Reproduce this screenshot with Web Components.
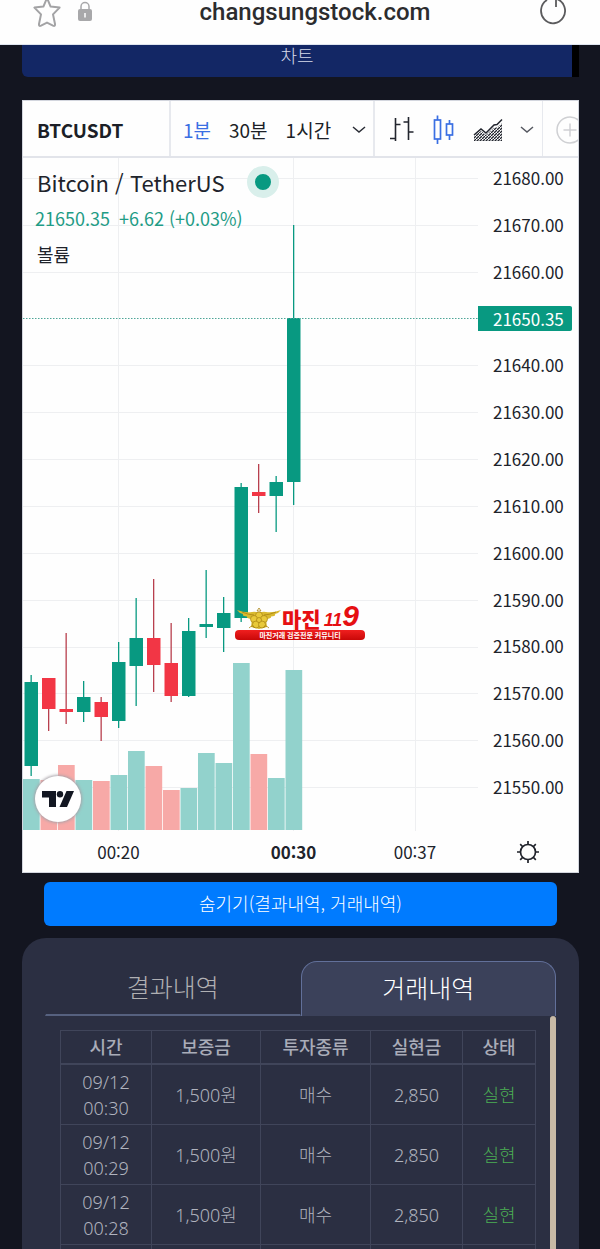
<!DOCTYPE html>
<html lang="ko">
<head>
<meta charset="utf-8">
<meta name="viewport" content="width=device-width, initial-scale=1">
<title>changsungstock.com</title>
<style>
  body {
    margin: 0;
    background: #131520;
    font-family: "Noto Sans CJK KR", sans-serif;
  }
</style>
</head>
<body>
<trade-app></trade-app>

<script>
class BrowserBar extends HTMLElement {
  constructor() {
    super();
    this.attachShadow({ mode: 'open' });
    this.shadowRoot.innerHTML = `
    <style>
    :host {
      display: flex;
      justify-content: space-between;
      align-items: flex-start;
      height: 44px;
      flex: none;
      padding: 0 34px 0 32px;
      background: #fefefe;
      border-bottom: 1px solid #dfe5ef;
    }
    button {
      display: block;
      border: 0;
      padding: 0;
      background: none;
      cursor: pointer;
    }
    .left {
      display: flex;
      gap: 16px;
    }
    .url {
      font: 500 24px/24px Roboto, sans-serif;
      color: #2c2c2e;
    }
    svg { display: block; }
    </style>
    <div class="left">
      <button aria-label="Bookmark">
        <svg width="30" height="30" viewBox="0 0 30 30" fill="none" stroke="#a3a3a5" stroke-width="2" stroke-linejoin="round">
          <path d="M15 -2 L18.6 6.6 L27.6 7.6 L21 14.4 L23 24 Q23.2 26.6 21 25.6 L15 22.6 L9 25.6 Q6.8 26.6 7 24 L9 14.4 L2.4 7.6 L11.4 6.6 Z"/>
        </svg>
      </button>
      <svg width="14" height="24" viewBox="0 0 14 24">
        <path d="M3 11 V6.5 a4 4 0 0 1 8 0 V11" fill="none" stroke="#a8a8aa" stroke-width="1.5"/>
        <rect x="0" y="9" width="14" height="12" rx="2" fill="#a8a8aa"/>
        <path d="M7 13 V17.500" stroke="#fff" stroke-width="1.5"/>
      </svg>
    </div>
    <button class="url">changsungstock.com</button>
    <button aria-label="Reload">
      <svg width="28" height="26" viewBox="0 0 28 26" fill="none" stroke="#5b5b5d" stroke-width="1.8">
        <path d="M19 -1 A12 12.5 0 1 1 9 0 M18 7 V-2"/>
      </svg>
    </button>
    `;
  }
}

class ChartToolbar extends HTMLElement {
  constructor() {
    super();
    this.attachShadow({ mode: 'open' });
    this.shadowRoot.innerHTML = `
    <style>
    :host {
      display: flex;
      height: 55px;
      border-bottom: 2px solid #e2e4ea;
      color: #1c1f27;
      overflow: hidden;
    }
    .group {
      display: flex;
      align-items: center;
      flex: none;
      box-sizing: border-box;
      padding-top: 2px;
      border-right: 2px solid #e7e9ee;
    }
    button {
      border: 0;
      padding: 0;
      background: none;
      font: inherit;
      font-size: 19px;
      line-height: 28px;
      color: inherit;
      cursor: pointer;
    }
    .symbol { width: 148px; padding-left: 14px; }
    .symbol button { font-weight: 700; }
    .times { width: 204px; padding-left: 12px; gap: 18px; }
    .styles { width: 168px; padding-left: 14px; gap: 17px; border-right-width: 1px; }
    .more { padding-left: 12px; flex: 1; min-width: 0; border: 0; overflow: hidden; }
    .active { color: #3a6fe3; }
    svg { display: block; flex: none; }
    </style>
    <div class="group symbol"><button>BTCUSDT</button></div>
    <div class="group times">
      <button class="active">1분</button>
      <button>30분</button>
      <button>1시간</button>
      <button aria-label="More intervals">
        <svg width="18" height="8" viewBox="0 0 18 8" fill="none" stroke="#2a2d36" stroke-width="1.5"><path d="M4 1 L10 6 L16 1"/></svg>
      </button>
    </div>
    <div class="group styles">
      <button aria-label="Bars">
        <svg width="26" height="30" viewBox="0 0 26 30" fill="none" stroke="#22252e" stroke-width="1.6">
          <path d="M6.5 3 V26 M1 23.5 H6.5 M6.5 9.5 H11.5 M19.5 2 V25 M14.5 7 H19.5 M19.5 17 H24.5"/>
        </svg>
      </button>
      <button aria-label="Candles">
        <svg width="24" height="30" viewBox="0 0 24 30" fill="none" stroke="#3a6fe3" stroke-width="1.7">
          <path d="M5.500 .5 V5 M5.500 24 V29 M17.500 5 V9 M17.500 20 V25"/>
          <rect x="2.500" y="5" width="6" height="19"/>
          <rect x="14.500" y="9" width="6" height="11"/>
        </svg>
      </button>
      <button aria-label="Area">
        <svg width="30" height="24" viewBox="0 0 30 24" fill="none">
          <defs>
            <pattern id="dots" width="3" height="3" patternUnits="userSpaceOnUse">
              <path d="M0 3 L3 0" stroke="#22252e" stroke-width="1.3"/>
            </pattern>
          </defs>
          <path d="M1 18 L8 13 L13 17 L21 9.5 L24 9.5 L29 5 V23 H1 Z" fill="url(#dots)"/>
          <path d="M1 17 L8 11 L13 15 L21 7 L24 6.5 L29 1.5" stroke="#22252e" stroke-width="1.5"/>
        </svg>
      </button>
      <button aria-label="More styles">
        <svg width="16" height="8" viewBox="0 0 16 8" fill="none" stroke="#555860" stroke-width="1.5"><path d="M1 1 L7 6 L13 1"/></svg>
      </button>
    </div>
    <div class="group more">
      <button aria-label="Compare">
        <svg width="30" height="30" viewBox="0 0 30 30" fill="none" stroke="#cfd0d3" stroke-width="1.5">
          <circle cx="15" cy="15" r="13"/><path d="M8.5 15 H21.5 M15 8.5 V21.5"/>
        </svg>
      </button>
    </div>
    `;
  }
}

class SiteMark extends HTMLElement {
  constructor() {
    super();
    this.attachShadow({ mode: 'open' });
    this.shadowRoot.innerHTML = `
    <style>
    :host {
      display: block;
      width: 130px;
      color: #e60f12;
      white-space: nowrap;
    }
    .top {
      display: flex;
      align-items: flex-end;
      height: 21px;
      padding-left: 2px;
    }
    .name {
      font-weight: 900;
      font-size: 21px;
      line-height: 24px;
      margin-left: 1px;
    }
    .num {
      font: italic 900 18px/20px "Liberation Sans", sans-serif;
      margin-left: 3px;
    }
    .num b { font-size: 30px; line-height: 20px; }
    .bar {
      height: 10px;
      border-radius: 4px;
      background: linear-gradient(#f01f1f, #c90808);
      color: #fff;
      font-weight: 700;
      font-size: 7px;
      line-height: 10px;
      text-align: center;
    }
    </style>
    <div class="top">
      <svg width="44" height="22" viewBox="0 0 44 22">
        <path d="M0 2 Q8 5 15 4 Q18 3 22 5 Q26 3 29 4 Q36 5 44 2 Q42 5 38 6 Q39 8 34 8.5 Q35 10.5 29 11 L30 19 L22 21 L14 19 L15 11 Q9 10.5 10 8.5 Q5 8 6 6 Q2 5 0 2Z" fill="#d9b92f"/>
        <g fill="#e8c93a" stroke="#a98412" stroke-width=".7">
          <circle cx="22" cy="7.5" r="3.5"/><circle cx="17" cy="11" r="3.5"/><circle cx="27" cy="11" r="3.5"/>
          <circle cx="19" cy="16.5" r="3.5"/><circle cx="25" cy="16.5" r="3.5"/><circle cx="22" cy="12" r="2.5"/>
        </g>
        <path d="M22 0 L24 3 H20Z M5 4 Q12 7 17 7 M39 4 Q32 7 27 7 M12 20 Q16 16 18 20 M32 20 Q28 16 26 20" fill="none" stroke="#a98412" stroke-width=".8"/>
      </svg>
      <span class="name">마진</span><span class="num">11<b>9</b></span>
    </div>
    <div class="bar">마진거래 검증전문 커뮤니티</div>
    `;
  }
}

// high, body top, body bottom, low, volume top
const CANDLES = [
  ['up', 517, 524, 608, 618, 621],
  ['down', 520, 520, 551, 573, 622],
  ['down', 475, 551, 554, 566, 607],
  ['up', 523, 539, 554, 564, 622],
  ['down', 539, 544, 559, 583, 623],
  ['up', 484, 504, 563, 570, 617],
  ['up', 440, 480, 508, 548, 593],
  ['down', 421, 480, 507, 534, 608],
  ['down', 465, 505, 538, 544, 632],
  ['up', 460, 473, 538, 539, 630],
  ['up', 412, 466, 469, 480, 595],
  ['up', 439, 455, 470, 494, 605],
  ['up', 325, 329, 460, 464, 505],
  ['down', 306, 334, 338, 355, 596],
  ['up', 318, 324, 338, 374, 620],
  ['up', 67, 160, 324, 347, 512],
];
const BASE = 672;
const STEP = 17.5;
const PRICES = ['21680.00', '21670.00', '21660.00', '21650.35', '21640.00', '21630.00', '21620.00',
  '21610.00', '21600.00', '21590.00', '21580.00', '21570.00', '21560.00', '21550.00'];

class PriceChart extends HTMLElement {
  constructor() {
    super();
    this.attachShadow({ mode: 'open' });

    const grid = PRICES.map((p, i) => p === '21650.35' ? '' :
      `<path class="grid" d="M0 ${Math.round(20 + i * 46.85)}.5 H455"/>`).join('');
    const bars = CANDLES.map(([dir, high, top, bottom, low, vol], i) => {
      const x = 8 + i * STEP;
      return `<g class="${dir}">
        <rect class="vol" x="${x - 8}" y="${vol}" width="16.7" height="${BASE - vol}"/>
        <rect class="wick" x="${x - 0.5}" y="${high}" width="1.3" height="${low - high}"/>
        <rect x="${x - 6.5}" y="${top}" width="13.5" height="${bottom - top}"/>
      </g>`;
    }).join('');
    const labels = PRICES.map(p => `<span${p === '21650.35' ? ' class="last"' : ''}>${p}</span>`).join('');

    this.shadowRoot.innerHTML = `
    <style>
    :host {
      display: grid;
      grid-template-columns: 1fr 100px;
      grid-template-rows: 673px 41px;
      color: #20232b;
      font-size: 17px;
    }
    .plot {
      display: grid;
      min-width: 0;
    }
    .plot > * { grid-area: 1 / 1; }
    .canvas { display: block; width: 100%; height: 673px; }
    .grid { stroke: #eeeff1; }
    .up { fill: #089981; }
    .down { fill: #f23645; }
    .down .wick { fill: #b8404e; }
    .up .vol { fill: #92d2cc; }
    .down .vol { fill: #f7a9a7; }
    .legend { padding: 8px 12px; z-index: 1; }
    .title {
      display: flex;
      align-items: center;
      gap: 22px;
      margin: 0;
      padding-left: 2px;
      font-size: 22px;
      font-weight: 400;
      line-height: 32px;
    }
    .live {
      width: 16px;
      height: 16px;
      border: 8px solid #d9efeb;
      border-radius: 50%;
      background: #089981;
    }
    .change {
      display: flex;
      gap: 9px;
      margin-top: 8px;
      font-size: 18px;
      line-height: 24px;
      color: #1f9c86;
    }
    .volume {
      margin-top: 12px;
      padding-left: 2px;
      font-size: 18px;
      line-height: 24px;
    }
    .logo {
      place-self: end start;
      display: flex;
      align-items: center;
      justify-content: center;
      width: 46px;
      height: 46px;
      margin: 0 0 9px 12px;
      border-radius: 50%;
      background: #fff;
      box-shadow: 0 0 3px 1px #a9a4aa;
    }
    site-mark { place-self: start; margin: 451px 0 0 212px; }
    .prices {
      display: flex;
      flex-direction: column;
      justify-content: space-between;
      align-items: flex-start;
      padding: 8px 0 32px;
      line-height: 24px;
    }
    .prices span { padding: 0 8px 0 15px; }
    .prices .last {
      background: #089981;
      color: #fff;
      border-radius: 0 2px 2px 0;
      box-shadow: 0 -1px #089981;
    }
    .times {
      display: grid;
      grid-template-columns: 191fr 159fr 84fr 21fr;
      align-items: center;
      text-align: center;
    }
    .times b { font-weight: 700; }
    .settings {
      justify-self: center;
      align-self: center;
      border: 0;
      padding: 0;
      background: none;
      cursor: pointer;
    }
    .settings svg { display: block; }
    </style>
    <div class="plot">
      <svg class="canvas" viewBox="0 0 455 673" preserveAspectRatio="none">
        ${grid}
        <path class="grid" d="M95.5 0 V673 M270.5 0 V673 M392.5 0 V673"/>
        ${bars}
        <path d="M0 160.5 H455" stroke="#4fa698" stroke-dasharray="1.5 1.5"/>
      </svg>
      <div class="legend">
        <h2 class="title">Bitcoin / TetherUS <i class="live"></i></h2>
        <div class="change"><span>21650.35</span><span>+6.62 (+0.03%)</span></div>
        <div class="volume">볼륨</div>
      </div>
      <a class="logo" href="#" aria-label="TradingView">
        <svg width="32" height="17" viewBox="0 0 32 17" fill="#131722">
          <path d="M0 0 H14 V16 H7 V6.5 H0Z M24.5 0 H32 L25 16 H17.5Z"/><circle cx="18" cy="3.2" r="3.2"/>
        </svg>
      </a>
      <site-mark></site-mark>
    </div>
    <div class="prices">${labels}</div>
    <div class="times"><span>00:20</span><b>00:30</b><span>00:37</span></div>
    <button class="settings" aria-label="Settings">
      <svg width="24" height="24" viewBox="-12 -12 24 24" fill="none" stroke="#20232b" stroke-width="1.7">
        <circle r="7.5"/>
        <path d="M0 -8 V-11 M0 8 V11 M-8 0 H-11 M8 0 H11 M-5.5 -5.5 L-7.8 -7.8 M5.5 -5.5 L7.8 -7.8 M-5.5 5.5 L-7.8 7.8 M5.5 5.5 L7.8 7.8"/>
      </svg>
    </button>
    `;
  }
}

class HistoryPanel extends HTMLElement {
  constructor() {
    super();
    this.attachShadow({ mode: 'open' });
    const rows = ['00:30', '00:29', '00:28'].map(t => `
      <tr><td>09/12<br>${t}</td><td>1,500원</td><td>매수</td><td>2,850</td><td class="done">실현</td></tr>`).join('');
    this.shadowRoot.innerHTML = `
    <style>
    :host {
      display: flex;
      flex-direction: column;
      padding: 23px 23px 0;
      border-radius: 24px 24px 0 0;
      background: #2b2f42;
      overflow: hidden;
    }
    .tabs {
      display: grid;
      grid-template-columns: 1fr 1fr;
      flex: none;
    }
    .tabs button {
      height: 55px;
      border: 1px solid transparent;
      border-bottom: 2px solid #56617f;
      padding: 0 0 4px;
      background: none;
      color: #b0b0b3;
      font: inherit;
      font-size: 25px;
      font-weight: 300;
      cursor: pointer;
    }
    .tabs .active {
      border: 1px solid #62709a;
      border-bottom: 0;
      border-radius: 16px 16px 0 0;
      background: #3b415a;
      color: #fff;
    }
    .body {
      display: flex;
      justify-content: space-between;
      flex: 1;
      min-height: 0;
      overflow: hidden;
    }
    .scroll {
      flex: 1;
      padding: 14px 14px 0 15px;
    }
    .thumb {
      width: 6px;
      border-radius: 3px 3px 0 0;
      background: #c8baa6;
    }
    table {
      width: 100%;
      table-layout: fixed;
      border-collapse: collapse;
      color: #b0b3be;
      font-family: "Noto Sans", "Noto Sans CJK KR", sans-serif;
      font-size: 18px;
      font-weight: 300;
      line-height: 26px;
      text-align: center;
    }
    th, td { border: 1px solid #40455a; padding: 0; }
    th { height: 32px; font-weight: 500; color: #a9acb8; border-bottom-width: 2px; }
    td { height: 59px; }
    tbody::after {
      content: "";
      display: table-row;
      height: 59px;
    }
    .done { color: #4cad54; }
    </style>
    <div class="tabs" role="tablist">
      <button role="tab" aria-selected="false">결과내역</button>
      <button role="tab" aria-selected="true" class="active">거래내역</button>
    </div>
    <div class="body">
      <div class="scroll">
        <table>
          <colgroup><col style="width:91px"><col style="width:109px"><col style="width:110px"><col style="width:92px"><col style="width:73px"></colgroup>
          <thead><tr><th>시간</th><th>보증금</th><th>투자종류</th><th>실현금</th><th>상태</th></tr></thead>
          <tbody>${rows}<tr><td></td><td></td><td></td><td></td><td></td></tr></tbody>
        </table>
      </div>
      <div class="thumb"></div>
    </div>
    `;
  }
}

class TradeApp extends HTMLElement {
  constructor() {
    super();
    this.attachShadow({ mode: 'open' });
    this.shadowRoot.innerHTML = `
    <style>
    :host {
      display: flex;
      flex-direction: column;
      height: 100vh;
      overflow: hidden;
    }
    main {
      display: flex;
      flex-direction: column;
      flex: 1;
      min-height: 0;
      padding: 0 21px 0 22px;
    }
    button {
      flex: none;
      padding: 0;
      font: inherit;
      font-weight: 300;
      color: #fff;
      cursor: pointer;
    }
    .chart-tab {
      height: 32px;
      border: 0;
      border-right: 7px solid #000;
      border-radius: 0 0 0 6px;
      background: #132765;
      color: #d6daea;
      font-size: 18px;
      line-height: 20px;
      padding-bottom: 12px;
    }
    .card {
      flex: none;
      margin: 23px 0 9px;
      border: 1px solid #d3d6de;
      background: #fefefe;
    }
    .hide {
      height: 44px;
      margin: 0 22px 12px;
      border: 0;
      border-radius: 6px;
      padding-bottom: 2px;
      background: #007bff;
      font-size: 18px;
    }
    history-panel { flex: 1; min-height: 0; }
    </style>
    <browser-bar></browser-bar>
    <main>
      <button class="chart-tab">차트</button>
      <section class="card">
        <chart-toolbar></chart-toolbar>
        <price-chart></price-chart>
      </section>
      <button class="hide">숨기기(결과내역, 거래내역)</button>
      <history-panel></history-panel>
    </main>
    `;
  }
}

customElements.define('browser-bar', BrowserBar);
customElements.define('chart-toolbar', ChartToolbar);
customElements.define('site-mark', SiteMark);
customElements.define('price-chart', PriceChart);
customElements.define('history-panel', HistoryPanel);
customElements.define('trade-app', TradeApp);
</script>
</body>
</html>
